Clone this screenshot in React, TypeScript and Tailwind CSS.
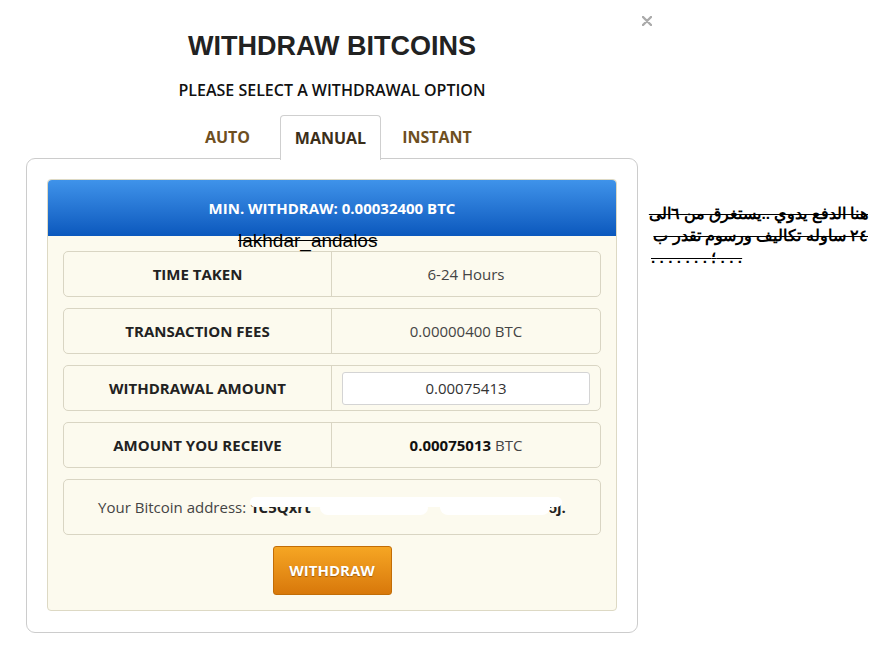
import React from "react"

const rowClass =
  "flex h-[46px] rounded-[5px] border border-[#d9d5c3] bg-[#fcfaee]"

function InfoRow({ label, children }: { label: string; children: React.ReactNode }) {
  return (
    <div className={rowClass}>
      <div className="flex w-1/2 items-center justify-center border-r border-[#d9d5c3] text-[15px] font-bold text-[#222]">
        {label}
      </div>
      <div className="flex w-1/2 items-center justify-center text-[15px] text-[#444]">
        {children}
      </div>
    </div>
  )
}

export default function App() {
  return (
    <div className="flex min-h-[646px] w-[873px] bg-white font-['Open_Sans',sans-serif]">
      {/* Left column: modal body */}
      <div className="flex w-[645px] flex-col pl-[26px] pr-[7px]">
        <h1 className="mt-[31px] text-center font-['Liberation_Sans',Arial,sans-serif] text-[27px] font-bold leading-[30px] text-[#222]">
          WITHDRAW BITCOINS
        </h1>
        <p className="mt-[19px] text-center text-[16px] font-semibold leading-[20px] text-[#111]">
          PLEASE SELECT A WITHDRAWAL OPTION
        </p>

        {/* Tabs */}
        <div className="relative z-10 ml-[149px] mt-[14px] flex h-[45px] items-end">
          <div className="flex h-[44px] w-[105px] items-center justify-center text-[16px] font-bold text-[#6e4f1f]">
            AUTO
          </div>
          <div className="-mb-[1px] flex h-[45px] w-[101px] items-center justify-center rounded-t-[4px] border border-b-0 border-[#cfcfcf] bg-white pb-[1px] text-[16px] font-bold text-[#3b2e1a]">
            MANUAL
          </div>
          <div className="flex h-[44px] w-[112px] items-center justify-center text-[16px] font-bold text-[#6e4f1f]">
            INSTANT
          </div>
        </div>

        {/* Card */}
        <div className="-mt-[1px] rounded-[9px] border border-[#cccccc] bg-white px-[20px] pb-[21px] pt-[20px]">
          <div className="relative rounded-[4px] border border-[#ddd9c4] bg-[#fcfaee] pb-[15px]">
            <div className="flex h-[56px] items-center justify-center rounded-t-[4px] bg-gradient-to-b from-[#3f93ea] to-[#0a58bd] text-[15px] font-bold text-white">
              MIN. WITHDRAW: 0.00032400 BTC
            </div>
            <span className="absolute left-[190px] top-[50px] font-['Liberation_Sans',Arial,sans-serif] text-[19px] leading-[21px] text-black line-through">
              lakhdar_andalos
            </span>

            <div className="flex flex-col gap-[11px] px-[15px] pt-[15px]">
              <InfoRow label="TIME TAKEN">6-24 Hours</InfoRow>
              <InfoRow label="TRANSACTION FEES">0.00000400 BTC</InfoRow>
              <InfoRow label="WITHDRAWAL AMOUNT">
                <div className="mx-[10px] flex h-[33px] w-full items-center justify-center rounded-[3px] border border-[#d4d4d4] bg-white text-[15px] text-[#333]">
                  0.00075413
                </div>
              </InfoRow>
              <InfoRow label="AMOUNT YOU RECEIVE">
                <span>
                  <span className="font-bold text-[#111]">0.00075013</span> BTC
                </span>
              </InfoRow>

              <div className="flex h-[56px] items-center justify-center rounded-[5px] border border-[#d9d5c3] bg-[#fcfaee] text-[15px] text-[#444]">
                <span>Your Bitcoin address:&nbsp;</span>
                <span className="relative flex h-[22px] items-center font-bold text-[#222]">
                  <span>1C5Qxrt</span>
                  <span className="inline-block w-[238px] text-[11px] tracking-[2px]">
                    <span className="ml-[44px]">''·'</span>
                    <span className="ml-[110px]">·· ··</span>
                  </span>
                  <span>ɔj.</span>
                  <span className="absolute left-0 top-[1px] z-10 h-[10px] w-[312px] rounded-full bg-white" />
                  <span className="absolute left-[70px] top-[4px] z-10 h-[15px] w-[108px] rounded-full bg-white" />
                  <span className="absolute left-[190px] top-[3px] z-10 h-[16px] w-[110px] rounded-full bg-white" />
                </span>
              </div>

              <div className="flex justify-center">
                <button className="h-[49px] w-[119px] rounded-[3px] border border-[#c26d06] bg-gradient-to-b from-[#f6a623] to-[#d8780a] text-[15px] font-bold text-white [text-shadow:0_1px_1px_rgba(120,60,0,0.6)]">
                  WITHDRAW
                </button>
              </div>
            </div>
          </div>
        </div>
      </div>

      {/* Right column: close mark and note */}
      <div className="flex flex-1 flex-col">
        <div className="pt-[16px]">
          <svg width="10" height="10" viewBox="0 0 10 10" className="ml-[-3px]">
            <path d="M1 1 L9 9 M9 1 L1 9" stroke="#aaaaaa" strokeWidth="2.4" strokeLinecap="round" />
          </svg>
        </div>
        <div className="mt-[177px] w-[224px] font-['Liberation_Sans',Arial,sans-serif] text-[15.5px] font-bold leading-[22px] text-black line-through">
          <p dir="rtl" className="pr-[1px] text-right">
            هنا الدفع يدوي ..يستغرق من ٦الى
            <br />
            ٢٤ ساوله تكاليف ورسوم تقدر ب
          </p>
          <p className="pl-[6px] tracking-[5.5px]">. . . . . . . ؛ . . .</p>
        </div>
      </div>
    </div>
  )
}
